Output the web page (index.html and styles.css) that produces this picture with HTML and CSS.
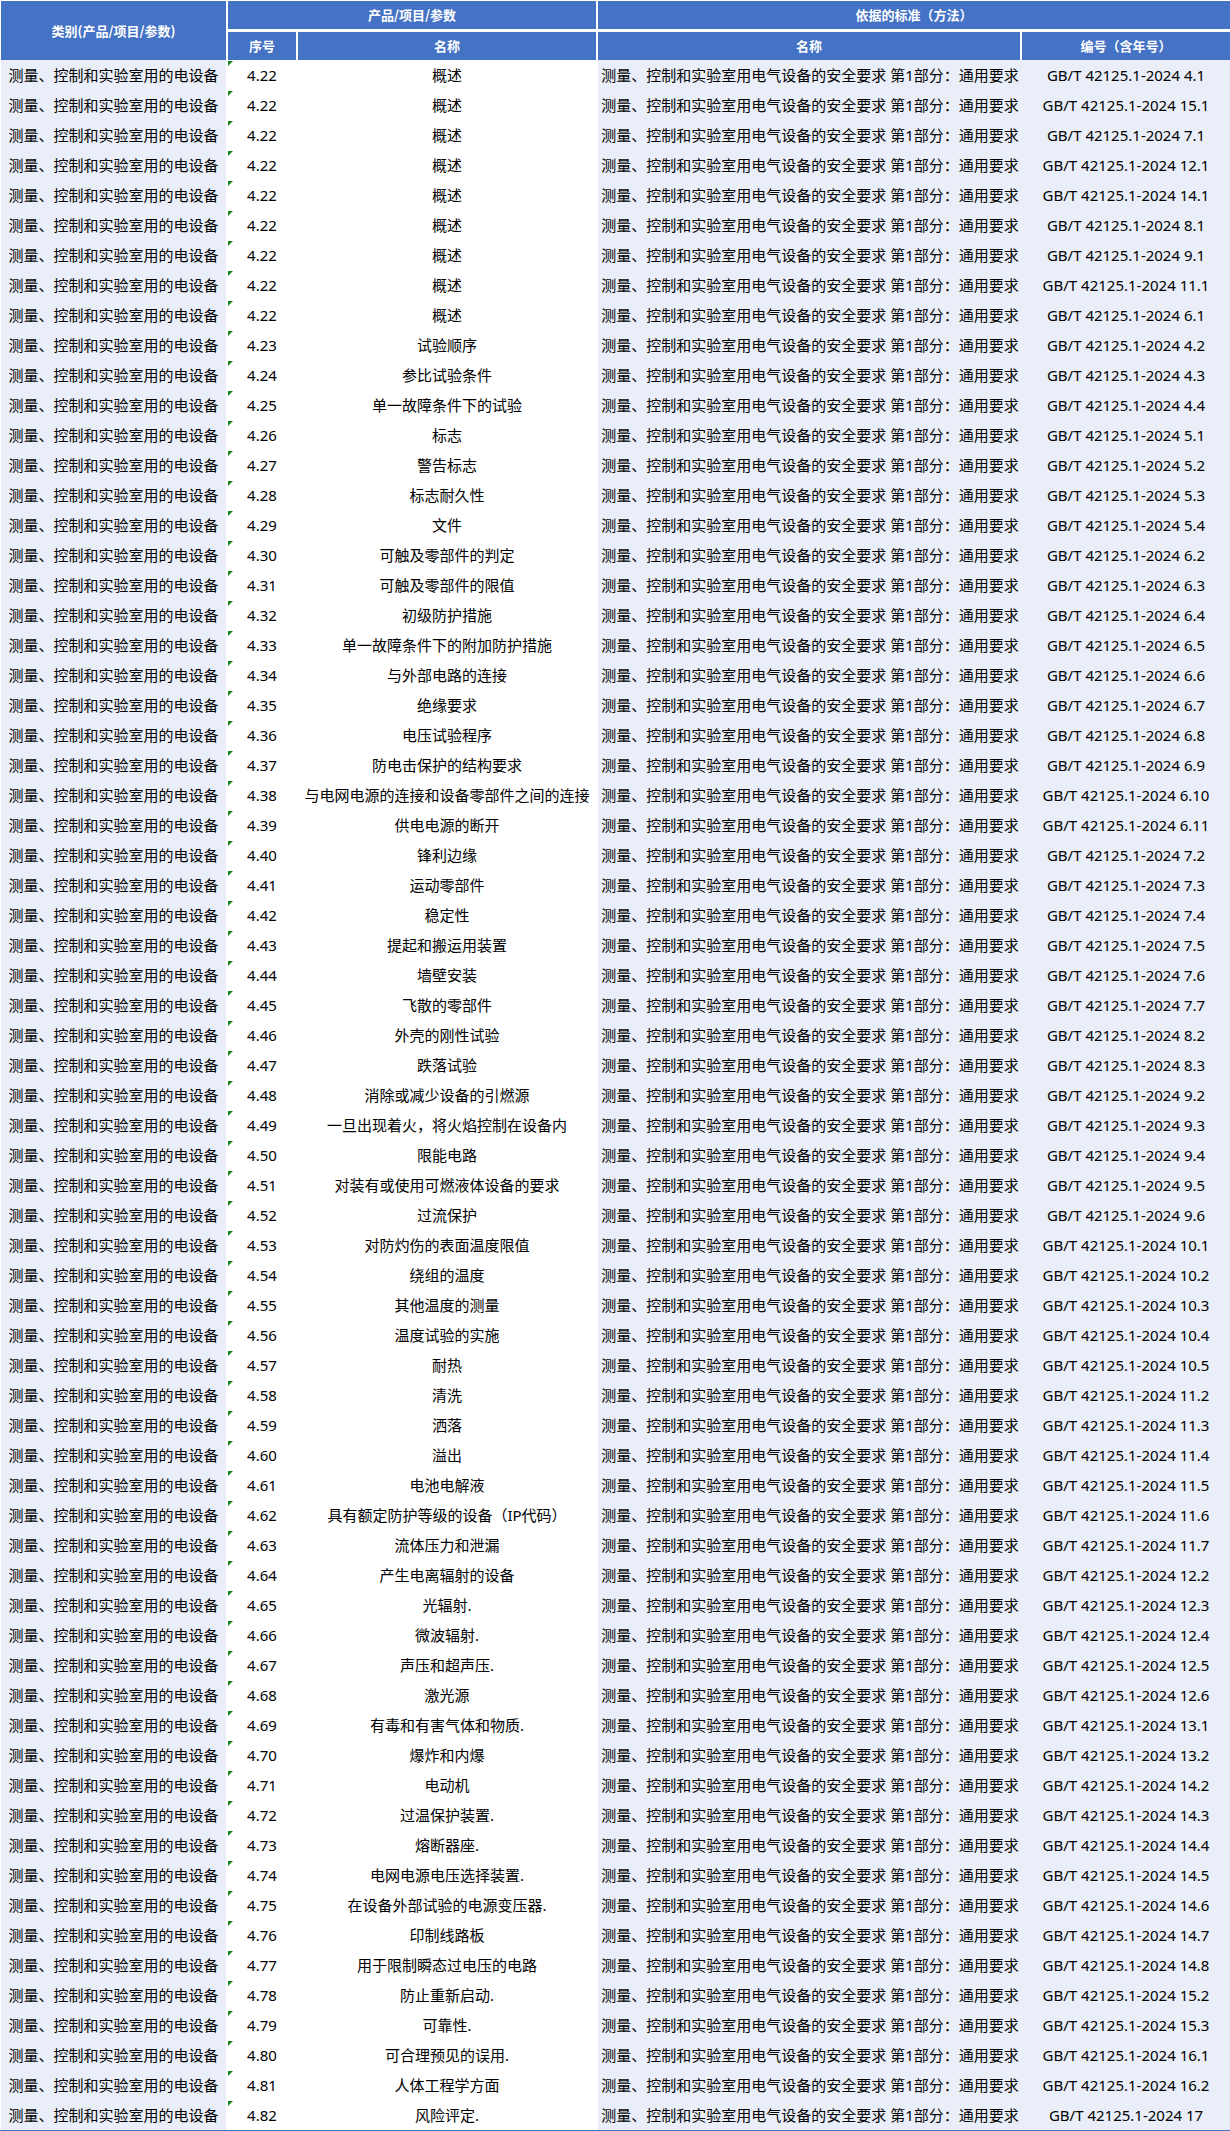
FILE: index.html
```html
<!DOCTYPE html>
<html lang="zh-CN">
<head>
<meta charset="utf-8">
<title>测量、控制和实验室用的电设备</title>
<link rel="stylesheet" href="styles.css">
</head>
<body>
<table class="grid">
<colgroup>
<col class="c-cat"><col class="c-seq"><col class="c-name"><col class="c-std"><col class="c-code">
</colgroup>
<thead>
<tr class="h1">
<th rowspan="2" class="hc hcat">类别(产品/项目/参数)</th>
<th colspan="2" class="hc hsep">产品/项目/参数</th>
<th colspan="2" class="hc">依据的标准（方法）</th>
</tr>
<tr class="h2">
<th class="hc hsep">序号</th>
<th class="hc hsep">名称</th>
<th class="hc hsep">名称</th>
<th class="hc">编号（含年号）</th>
</tr>
</thead>
<tbody>
<tr><td class="cat">测量、控制和实验室用的电设备</td><td class="seq">4.22</td><td class="name">概述</td><td class="std">测量、控制和实验室用电气设备的安全要求 第1部分：通用要求</td><td class="code">GB/T 42125.1-2024 4.1</td></tr>
<tr><td class="cat">测量、控制和实验室用的电设备</td><td class="seq">4.22</td><td class="name">概述</td><td class="std">测量、控制和实验室用电气设备的安全要求 第1部分：通用要求</td><td class="code">GB/T 42125.1-2024 15.1</td></tr>
<tr><td class="cat">测量、控制和实验室用的电设备</td><td class="seq">4.22</td><td class="name">概述</td><td class="std">测量、控制和实验室用电气设备的安全要求 第1部分：通用要求</td><td class="code">GB/T 42125.1-2024 7.1</td></tr>
<tr><td class="cat">测量、控制和实验室用的电设备</td><td class="seq">4.22</td><td class="name">概述</td><td class="std">测量、控制和实验室用电气设备的安全要求 第1部分：通用要求</td><td class="code">GB/T 42125.1-2024 12.1</td></tr>
<tr><td class="cat">测量、控制和实验室用的电设备</td><td class="seq">4.22</td><td class="name">概述</td><td class="std">测量、控制和实验室用电气设备的安全要求 第1部分：通用要求</td><td class="code">GB/T 42125.1-2024 14.1</td></tr>
<tr><td class="cat">测量、控制和实验室用的电设备</td><td class="seq">4.22</td><td class="name">概述</td><td class="std">测量、控制和实验室用电气设备的安全要求 第1部分：通用要求</td><td class="code">GB/T 42125.1-2024 8.1</td></tr>
<tr><td class="cat">测量、控制和实验室用的电设备</td><td class="seq">4.22</td><td class="name">概述</td><td class="std">测量、控制和实验室用电气设备的安全要求 第1部分：通用要求</td><td class="code">GB/T 42125.1-2024 9.1</td></tr>
<tr><td class="cat">测量、控制和实验室用的电设备</td><td class="seq">4.22</td><td class="name">概述</td><td class="std">测量、控制和实验室用电气设备的安全要求 第1部分：通用要求</td><td class="code">GB/T 42125.1-2024 11.1</td></tr>
<tr><td class="cat">测量、控制和实验室用的电设备</td><td class="seq">4.22</td><td class="name">概述</td><td class="std">测量、控制和实验室用电气设备的安全要求 第1部分：通用要求</td><td class="code">GB/T 42125.1-2024 6.1</td></tr>
<tr><td class="cat">测量、控制和实验室用的电设备</td><td class="seq">4.23</td><td class="name">试验顺序</td><td class="std">测量、控制和实验室用电气设备的安全要求 第1部分：通用要求</td><td class="code">GB/T 42125.1-2024 4.2</td></tr>
<tr><td class="cat">测量、控制和实验室用的电设备</td><td class="seq">4.24</td><td class="name">参比试验条件</td><td class="std">测量、控制和实验室用电气设备的安全要求 第1部分：通用要求</td><td class="code">GB/T 42125.1-2024 4.3</td></tr>
<tr><td class="cat">测量、控制和实验室用的电设备</td><td class="seq">4.25</td><td class="name">单一故障条件下的试验</td><td class="std">测量、控制和实验室用电气设备的安全要求 第1部分：通用要求</td><td class="code">GB/T 42125.1-2024 4.4</td></tr>
<tr><td class="cat">测量、控制和实验室用的电设备</td><td class="seq">4.26</td><td class="name">标志</td><td class="std">测量、控制和实验室用电气设备的安全要求 第1部分：通用要求</td><td class="code">GB/T 42125.1-2024 5.1</td></tr>
<tr><td class="cat">测量、控制和实验室用的电设备</td><td class="seq">4.27</td><td class="name">警告标志</td><td class="std">测量、控制和实验室用电气设备的安全要求 第1部分：通用要求</td><td class="code">GB/T 42125.1-2024 5.2</td></tr>
<tr><td class="cat">测量、控制和实验室用的电设备</td><td class="seq">4.28</td><td class="name">标志耐久性</td><td class="std">测量、控制和实验室用电气设备的安全要求 第1部分：通用要求</td><td class="code">GB/T 42125.1-2024 5.3</td></tr>
<tr><td class="cat">测量、控制和实验室用的电设备</td><td class="seq">4.29</td><td class="name">文件</td><td class="std">测量、控制和实验室用电气设备的安全要求 第1部分：通用要求</td><td class="code">GB/T 42125.1-2024 5.4</td></tr>
<tr><td class="cat">测量、控制和实验室用的电设备</td><td class="seq">4.30</td><td class="name">可触及零部件的判定</td><td class="std">测量、控制和实验室用电气设备的安全要求 第1部分：通用要求</td><td class="code">GB/T 42125.1-2024 6.2</td></tr>
<tr><td class="cat">测量、控制和实验室用的电设备</td><td class="seq">4.31</td><td class="name">可触及零部件的限值</td><td class="std">测量、控制和实验室用电气设备的安全要求 第1部分：通用要求</td><td class="code">GB/T 42125.1-2024 6.3</td></tr>
<tr><td class="cat">测量、控制和实验室用的电设备</td><td class="seq">4.32</td><td class="name">初级防护措施</td><td class="std">测量、控制和实验室用电气设备的安全要求 第1部分：通用要求</td><td class="code">GB/T 42125.1-2024 6.4</td></tr>
<tr><td class="cat">测量、控制和实验室用的电设备</td><td class="seq">4.33</td><td class="name">单一故障条件下的附加防护措施</td><td class="std">测量、控制和实验室用电气设备的安全要求 第1部分：通用要求</td><td class="code">GB/T 42125.1-2024 6.5</td></tr>
<tr><td class="cat">测量、控制和实验室用的电设备</td><td class="seq">4.34</td><td class="name">与外部电路的连接</td><td class="std">测量、控制和实验室用电气设备的安全要求 第1部分：通用要求</td><td class="code">GB/T 42125.1-2024 6.6</td></tr>
<tr><td class="cat">测量、控制和实验室用的电设备</td><td class="seq">4.35</td><td class="name">绝缘要求</td><td class="std">测量、控制和实验室用电气设备的安全要求 第1部分：通用要求</td><td class="code">GB/T 42125.1-2024 6.7</td></tr>
<tr><td class="cat">测量、控制和实验室用的电设备</td><td class="seq">4.36</td><td class="name">电压试验程序</td><td class="std">测量、控制和实验室用电气设备的安全要求 第1部分：通用要求</td><td class="code">GB/T 42125.1-2024 6.8</td></tr>
<tr><td class="cat">测量、控制和实验室用的电设备</td><td class="seq">4.37</td><td class="name">防电击保护的结构要求</td><td class="std">测量、控制和实验室用电气设备的安全要求 第1部分：通用要求</td><td class="code">GB/T 42125.1-2024 6.9</td></tr>
<tr><td class="cat">测量、控制和实验室用的电设备</td><td class="seq">4.38</td><td class="name">与电网电源的连接和设备零部件之间的连接</td><td class="std">测量、控制和实验室用电气设备的安全要求 第1部分：通用要求</td><td class="code">GB/T 42125.1-2024 6.10</td></tr>
<tr><td class="cat">测量、控制和实验室用的电设备</td><td class="seq">4.39</td><td class="name">供电电源的断开</td><td class="std">测量、控制和实验室用电气设备的安全要求 第1部分：通用要求</td><td class="code">GB/T 42125.1-2024 6.11</td></tr>
<tr><td class="cat">测量、控制和实验室用的电设备</td><td class="seq">4.40</td><td class="name">锋利边缘</td><td class="std">测量、控制和实验室用电气设备的安全要求 第1部分：通用要求</td><td class="code">GB/T 42125.1-2024 7.2</td></tr>
<tr><td class="cat">测量、控制和实验室用的电设备</td><td class="seq">4.41</td><td class="name">运动零部件</td><td class="std">测量、控制和实验室用电气设备的安全要求 第1部分：通用要求</td><td class="code">GB/T 42125.1-2024 7.3</td></tr>
<tr><td class="cat">测量、控制和实验室用的电设备</td><td class="seq">4.42</td><td class="name">稳定性</td><td class="std">测量、控制和实验室用电气设备的安全要求 第1部分：通用要求</td><td class="code">GB/T 42125.1-2024 7.4</td></tr>
<tr><td class="cat">测量、控制和实验室用的电设备</td><td class="seq">4.43</td><td class="name">提起和搬运用装置</td><td class="std">测量、控制和实验室用电气设备的安全要求 第1部分：通用要求</td><td class="code">GB/T 42125.1-2024 7.5</td></tr>
<tr><td class="cat">测量、控制和实验室用的电设备</td><td class="seq">4.44</td><td class="name">墙壁安装</td><td class="std">测量、控制和实验室用电气设备的安全要求 第1部分：通用要求</td><td class="code">GB/T 42125.1-2024 7.6</td></tr>
<tr><td class="cat">测量、控制和实验室用的电设备</td><td class="seq">4.45</td><td class="name">飞散的零部件</td><td class="std">测量、控制和实验室用电气设备的安全要求 第1部分：通用要求</td><td class="code">GB/T 42125.1-2024 7.7</td></tr>
<tr><td class="cat">测量、控制和实验室用的电设备</td><td class="seq">4.46</td><td class="name">外壳的刚性试验</td><td class="std">测量、控制和实验室用电气设备的安全要求 第1部分：通用要求</td><td class="code">GB/T 42125.1-2024 8.2</td></tr>
<tr><td class="cat">测量、控制和实验室用的电设备</td><td class="seq">4.47</td><td class="name">跌落试验</td><td class="std">测量、控制和实验室用电气设备的安全要求 第1部分：通用要求</td><td class="code">GB/T 42125.1-2024 8.3</td></tr>
<tr><td class="cat">测量、控制和实验室用的电设备</td><td class="seq">4.48</td><td class="name">消除或减少设备的引燃源</td><td class="std">测量、控制和实验室用电气设备的安全要求 第1部分：通用要求</td><td class="code">GB/T 42125.1-2024 9.2</td></tr>
<tr><td class="cat">测量、控制和实验室用的电设备</td><td class="seq">4.49</td><td class="name">一旦出现着火，将火焰控制在设备内</td><td class="std">测量、控制和实验室用电气设备的安全要求 第1部分：通用要求</td><td class="code">GB/T 42125.1-2024 9.3</td></tr>
<tr><td class="cat">测量、控制和实验室用的电设备</td><td class="seq">4.50</td><td class="name">限能电路</td><td class="std">测量、控制和实验室用电气设备的安全要求 第1部分：通用要求</td><td class="code">GB/T 42125.1-2024 9.4</td></tr>
<tr><td class="cat">测量、控制和实验室用的电设备</td><td class="seq">4.51</td><td class="name">对装有或使用可燃液体设备的要求</td><td class="std">测量、控制和实验室用电气设备的安全要求 第1部分：通用要求</td><td class="code">GB/T 42125.1-2024 9.5</td></tr>
<tr><td class="cat">测量、控制和实验室用的电设备</td><td class="seq">4.52</td><td class="name">过流保护</td><td class="std">测量、控制和实验室用电气设备的安全要求 第1部分：通用要求</td><td class="code">GB/T 42125.1-2024 9.6</td></tr>
<tr><td class="cat">测量、控制和实验室用的电设备</td><td class="seq">4.53</td><td class="name">对防灼伤的表面温度限值</td><td class="std">测量、控制和实验室用电气设备的安全要求 第1部分：通用要求</td><td class="code">GB/T 42125.1-2024 10.1</td></tr>
<tr><td class="cat">测量、控制和实验室用的电设备</td><td class="seq">4.54</td><td class="name">绕组的温度</td><td class="std">测量、控制和实验室用电气设备的安全要求 第1部分：通用要求</td><td class="code">GB/T 42125.1-2024 10.2</td></tr>
<tr><td class="cat">测量、控制和实验室用的电设备</td><td class="seq">4.55</td><td class="name">其他温度的测量</td><td class="std">测量、控制和实验室用电气设备的安全要求 第1部分：通用要求</td><td class="code">GB/T 42125.1-2024 10.3</td></tr>
<tr><td class="cat">测量、控制和实验室用的电设备</td><td class="seq">4.56</td><td class="name">温度试验的实施</td><td class="std">测量、控制和实验室用电气设备的安全要求 第1部分：通用要求</td><td class="code">GB/T 42125.1-2024 10.4</td></tr>
<tr><td class="cat">测量、控制和实验室用的电设备</td><td class="seq">4.57</td><td class="name">耐热</td><td class="std">测量、控制和实验室用电气设备的安全要求 第1部分：通用要求</td><td class="code">GB/T 42125.1-2024 10.5</td></tr>
<tr><td class="cat">测量、控制和实验室用的电设备</td><td class="seq">4.58</td><td class="name">清洗</td><td class="std">测量、控制和实验室用电气设备的安全要求 第1部分：通用要求</td><td class="code">GB/T 42125.1-2024 11.2</td></tr>
<tr><td class="cat">测量、控制和实验室用的电设备</td><td class="seq">4.59</td><td class="name">洒落</td><td class="std">测量、控制和实验室用电气设备的安全要求 第1部分：通用要求</td><td class="code">GB/T 42125.1-2024 11.3</td></tr>
<tr><td class="cat">测量、控制和实验室用的电设备</td><td class="seq">4.60</td><td class="name">溢出</td><td class="std">测量、控制和实验室用电气设备的安全要求 第1部分：通用要求</td><td class="code">GB/T 42125.1-2024 11.4</td></tr>
<tr><td class="cat">测量、控制和实验室用的电设备</td><td class="seq">4.61</td><td class="name">电池电解液</td><td class="std">测量、控制和实验室用电气设备的安全要求 第1部分：通用要求</td><td class="code">GB/T 42125.1-2024 11.5</td></tr>
<tr><td class="cat">测量、控制和实验室用的电设备</td><td class="seq">4.62</td><td class="name">具有额定防护等级的设备（IP代码）</td><td class="std">测量、控制和实验室用电气设备的安全要求 第1部分：通用要求</td><td class="code">GB/T 42125.1-2024 11.6</td></tr>
<tr><td class="cat">测量、控制和实验室用的电设备</td><td class="seq">4.63</td><td class="name">流体压力和泄漏</td><td class="std">测量、控制和实验室用电气设备的安全要求 第1部分：通用要求</td><td class="code">GB/T 42125.1-2024 11.7</td></tr>
<tr><td class="cat">测量、控制和实验室用的电设备</td><td class="seq">4.64</td><td class="name">产生电离辐射的设备</td><td class="std">测量、控制和实验室用电气设备的安全要求 第1部分：通用要求</td><td class="code">GB/T 42125.1-2024 12.2</td></tr>
<tr><td class="cat">测量、控制和实验室用的电设备</td><td class="seq">4.65</td><td class="name">光辐射.</td><td class="std">测量、控制和实验室用电气设备的安全要求 第1部分：通用要求</td><td class="code">GB/T 42125.1-2024 12.3</td></tr>
<tr><td class="cat">测量、控制和实验室用的电设备</td><td class="seq">4.66</td><td class="name">微波辐射.</td><td class="std">测量、控制和实验室用电气设备的安全要求 第1部分：通用要求</td><td class="code">GB/T 42125.1-2024 12.4</td></tr>
<tr><td class="cat">测量、控制和实验室用的电设备</td><td class="seq">4.67</td><td class="name">声压和超声压.</td><td class="std">测量、控制和实验室用电气设备的安全要求 第1部分：通用要求</td><td class="code">GB/T 42125.1-2024 12.5</td></tr>
<tr><td class="cat">测量、控制和实验室用的电设备</td><td class="seq">4.68</td><td class="name">激光源</td><td class="std">测量、控制和实验室用电气设备的安全要求 第1部分：通用要求</td><td class="code">GB/T 42125.1-2024 12.6</td></tr>
<tr><td class="cat">测量、控制和实验室用的电设备</td><td class="seq">4.69</td><td class="name">有毒和有害气体和物质.</td><td class="std">测量、控制和实验室用电气设备的安全要求 第1部分：通用要求</td><td class="code">GB/T 42125.1-2024 13.1</td></tr>
<tr><td class="cat">测量、控制和实验室用的电设备</td><td class="seq">4.70</td><td class="name">爆炸和内爆</td><td class="std">测量、控制和实验室用电气设备的安全要求 第1部分：通用要求</td><td class="code">GB/T 42125.1-2024 13.2</td></tr>
<tr><td class="cat">测量、控制和实验室用的电设备</td><td class="seq">4.71</td><td class="name">电动机</td><td class="std">测量、控制和实验室用电气设备的安全要求 第1部分：通用要求</td><td class="code">GB/T 42125.1-2024 14.2</td></tr>
<tr><td class="cat">测量、控制和实验室用的电设备</td><td class="seq">4.72</td><td class="name">过温保护装置.</td><td class="std">测量、控制和实验室用电气设备的安全要求 第1部分：通用要求</td><td class="code">GB/T 42125.1-2024 14.3</td></tr>
<tr><td class="cat">测量、控制和实验室用的电设备</td><td class="seq">4.73</td><td class="name">熔断器座.</td><td class="std">测量、控制和实验室用电气设备的安全要求 第1部分：通用要求</td><td class="code">GB/T 42125.1-2024 14.4</td></tr>
<tr><td class="cat">测量、控制和实验室用的电设备</td><td class="seq">4.74</td><td class="name">电网电源电压选择装置.</td><td class="std">测量、控制和实验室用电气设备的安全要求 第1部分：通用要求</td><td class="code">GB/T 42125.1-2024 14.5</td></tr>
<tr><td class="cat">测量、控制和实验室用的电设备</td><td class="seq">4.75</td><td class="name">在设备外部试验的电源变压器.</td><td class="std">测量、控制和实验室用电气设备的安全要求 第1部分：通用要求</td><td class="code">GB/T 42125.1-2024 14.6</td></tr>
<tr><td class="cat">测量、控制和实验室用的电设备</td><td class="seq">4.76</td><td class="name">印制线路板</td><td class="std">测量、控制和实验室用电气设备的安全要求 第1部分：通用要求</td><td class="code">GB/T 42125.1-2024 14.7</td></tr>
<tr><td class="cat">测量、控制和实验室用的电设备</td><td class="seq">4.77</td><td class="name">用于限制瞬态过电压的电路</td><td class="std">测量、控制和实验室用电气设备的安全要求 第1部分：通用要求</td><td class="code">GB/T 42125.1-2024 14.8</td></tr>
<tr><td class="cat">测量、控制和实验室用的电设备</td><td class="seq">4.78</td><td class="name">防止重新启动.</td><td class="std">测量、控制和实验室用电气设备的安全要求 第1部分：通用要求</td><td class="code">GB/T 42125.1-2024 15.2</td></tr>
<tr><td class="cat">测量、控制和实验室用的电设备</td><td class="seq">4.79</td><td class="name">可靠性.</td><td class="std">测量、控制和实验室用电气设备的安全要求 第1部分：通用要求</td><td class="code">GB/T 42125.1-2024 15.3</td></tr>
<tr><td class="cat">测量、控制和实验室用的电设备</td><td class="seq">4.80</td><td class="name">可合理预见的误用.</td><td class="std">测量、控制和实验室用电气设备的安全要求 第1部分：通用要求</td><td class="code">GB/T 42125.1-2024 16.1</td></tr>
<tr><td class="cat">测量、控制和实验室用的电设备</td><td class="seq">4.81</td><td class="name">人体工程学方面</td><td class="std">测量、控制和实验室用电气设备的安全要求 第1部分：通用要求</td><td class="code">GB/T 42125.1-2024 16.2</td></tr>
<tr><td class="cat">测量、控制和实验室用的电设备</td><td class="seq">4.82</td><td class="name">风险评定.</td><td class="std">测量、控制和实验室用电气设备的安全要求 第1部分：通用要求</td><td class="code">GB/T 42125.1-2024 17</td></tr>
</tbody>
</table>
<div class="rule"></div>
</body>
</html>
```
FILE: styles.css
```css
html, body {
  margin: 0;
  padding: 0;
  background: #ffffff;
}
body {
  padding-top: 1px;
  font-family: "Noto Sans CJK SC", "Noto Sans", sans-serif;
  color: #000000;
}
.grid {
  margin-left: 1px;
  width: 1229px;
  table-layout: fixed;
  border-collapse: separate;
  border-spacing: 0;
}
.c-cat { width: 227px; }
.c-seq { width: 70px; }
.c-name { width: 300px; }
.c-std { width: 424px; }
.c-code { width: 208px; }

.grid th, .grid td {
  box-sizing: border-box;
  padding: 0;
  text-align: center;
  vertical-align: middle;
  white-space: nowrap;
  overflow: hidden;
}
.hc {
  background: #4472c4;
  color: #ffffff;
  font-size: 13px;
  font-weight: bold;
  line-height: 18px;
}
.h1 .hc {
  height: 31px;
  border-bottom: 3px solid #ffffff;
}
.h1 .hcat {
  height: 59px;
  border-bottom: 0;
  border-right: 2px solid #ffffff;
}
.h2 .hc {
  height: 28px;
}
.hsep {
  border-right: 2px solid #ffffff;
}
.grid td {
  height: 30px;
  font-family: "Noto Sans", "Noto Sans CJK SC", sans-serif;
  font-size: 15px;
  line-height: 20px;
}
.cat {
  background: #e9eef8;
  border-right: 2px solid #ffffff;
}
.seq {
  position: relative;
  background: #ffffff;
  border-right: 2px solid #ffffff;
}
.seq::before {
  content: "";
  position: absolute;
  top: 1px;
  left: 0;
  width: 0;
  height: 0;
  border-top: 5px solid #15871a;
  border-right: 5px solid transparent;
}
.name {
  background: #ffffff;
  border-right: 2px solid #ffffff;
}
.std {
  background: #e9eef8;
}
.code {
  background: #e9eef8;
}
.rule {
  height: 1px;
  background: #4472c4;
}
```
